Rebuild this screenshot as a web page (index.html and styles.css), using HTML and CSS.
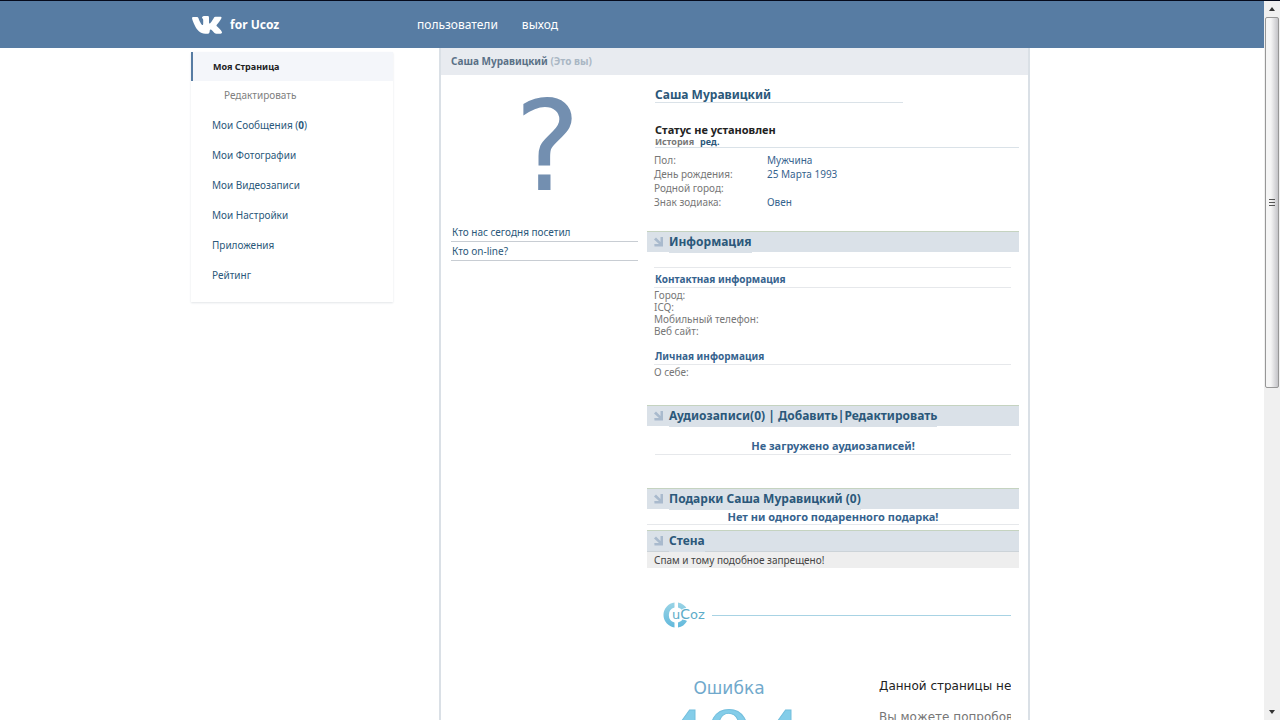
FILE: index.html
```html
<!DOCTYPE html>
<html lang="ru">
<head>
<meta charset="utf-8">
<title>Саша Муравицкий</title>
<link rel="stylesheet" href="styles.css">
</head>
<body>
<svg class="defs" aria-hidden="true">
  <symbol id="arrow" viewBox="0 0 10 10"><path d="M0 2.500L2 .5l4.500 4.500V0H9v9.500H.5L.3 7H5z" fill="#a9bacd"/></symbol>
</svg>
<div class="window">
  <div class="view">
    <header class="top">
      <div class="wrap top-row">
        <a class="brand" href="#">
          <svg class="vk" viewBox="0 0 30 18" aria-hidden="true"><path fill="#fff" d="M0 2Q0 1 1.200 1H5q1 0 1.500 1.200C7.800 6 9.600 9 10.500 9c.6 0 .7-.6.700-2V4c0-1.600-1.200-1.500-1.200-2.200C10 .6 11 0 13 0h2.500c1.200 0 1.500.6 1.500 2v4.500c0 1 .6 1.300 1.200.7C20 5.500 21.400 2.800 22 1.600 22.300 1 22.700.800 23.500.800h4.700c1.400 0 1.500.7 1.200 1.500-.8 2-3 4.600-4.600 6.500-.5.600-.4 1 .1 1.500 1.500 1.400 4.400 4.100 5 5.700.3 1-.2 1.700-1.500 1.700h-4c-1.500 0-2.300-1.200-4-3-1.400-1.500-2.400-1.800-2.600-.4-.2 2.200-.4 3.400-2 3.400h-2.500C8 17.700 5 14 2.800 9.500 1.500 7 .3 4 0 2z"/></svg>
          <span>for Ucoz</span>
        </a>
        <nav class="top-nav"><a href="#">пользователи</a><a href="#">выход</a></nav>
      </div>
    </header>
    <div class="wrap columns">
      <nav class="menu">
        <a class="current" href="#">Моя Страница</a>
        <a class="sub" href="#">Редактировать</a>
        <a href="#">Мои Сообщения (<b>0</b>)</a>
        <a href="#">Мои Фотографии</a>
        <a href="#">Мои Видеозаписи</a>
        <a href="#">Мои Настройки</a>
        <a href="#">Приложения</a>
        <a href="#">Рейтинг</a>
      </nav>
      <main class="panel">
        <h1 class="panel-title">Саша Муравицкий <span>(Это вы)</span></h1>
        <div class="panel-body">
          <div class="side">
            <div class="avatar">?</div>
            <a href="#">Кто нас сегодня посетил</a>
            <a href="#">Кто on-line?</a>
          </div>
          <div class="profile">
            <h2 class="name">Саша Муравицкий</h2>
            <div class="status">
              <p class="status-text">Статус не установлен</p>
              <p class="status-links"><a class="history" href="#">История</a><a href="#">ред.</a></p>
            </div>
            <table class="facts">
              <tr><th>Пол:</th><td>Мужчина</td></tr>
              <tr><th>День рождения:</th><td>25 Марта 1993</td></tr>
              <tr><th>Родной город:</th><td></td></tr>
              <tr><th>Знак зодиака:</th><td>Овен</td></tr>
            </table>

            <h2 class="bar"><svg aria-hidden="true"><use href="#arrow"/></svg><span>Информация</span></h2>
            <section class="info">
              <h3 class="contact">Контактная информация</h3>
              <ul><li>Город:</li><li>ICQ:</li><li>Мобильный телефон:</li><li>Веб сайт:</li></ul>
              <h3>Личная информация</h3>
              <ul><li>О себе:</li></ul>
            </section>

            <h2 class="bar"><svg aria-hidden="true"><use href="#arrow"/></svg><span>Аудиозаписи(0) | <a href="#">Добавить</a>|<a href="#">Редактировать</a></span></h2>
            <p class="empty audio">Не загружено аудиозаписей!</p>

            <h2 class="bar"><svg aria-hidden="true"><use href="#arrow"/></svg><span>Подарки Саша Муравицкий (0)</span></h2>
            <p class="empty gifts">Нет ни одного подаренного подарка!</p>

            <h2 class="bar"><svg aria-hidden="true"><use href="#arrow"/></svg><span>Стена</span></h2>
            <p class="notice">Спам и тому подобное запрещено!</p>

            <section class="frame">
              <div class="frame-head">
                <svg class="ucoz" viewBox="0 0 42 26" role="img" aria-label="uCoz">
                  <defs><linearGradient id="ring" x2="0" y2="1"><stop offset="0" stop-color="#9ad4e6"/><stop offset="1" stop-color="#62b9dc"/></linearGradient></defs>
                  <path fill="url(#ring)" d="M11.500 .5A12.600 12.600 0 0 0 11.500 25.500V20.500A7.800 7.800 0 0 1 11.500 5.500ZM15 .5Q21 1.500 24 7L20 9Q18 6 15 5.500ZM15 25.500Q21 24.500 24 19L20 17Q18 20 15 20.500Z"/>
                  <text x="9" y="17" class="ucoz-text">u<tspan class="ucoz-big">C</tspan>oz</text>
                </svg>
                <hr>
              </div>
              <div class="frame-body">
                <div class="error"><p>Ошибка</p><strong>404</strong></div>
                <div class="message"><p>Данной страницы не</p><p class="hint">Вы можете попробовать</p></div>
              </div>
            </section>
          </div>
        </div>
      </main>
    </div>
  </div>
  <div class="scroll" aria-hidden="true">
    <svg class="scroll-arrow" viewBox="0 0 16 16"><path d="M5 10l3-4 3 4z" fill="#333"/></svg>
    <div class="track"><div class="thumb"><i></i><i></i><i></i></div></div>
    <svg class="scroll-arrow" viewBox="0 0 16 16"><path d="M5 6l3 4 3-4z" fill="#333"/></svg>
  </div>
</div>
</body>
</html>
```
FILE: styles.css
```css
* { box-sizing: border-box; }
body {
  margin: 0;
  font: 10px/14px "Noto Sans", Tahoma, sans-serif;
  color: #777;
  background: #fff;
}
h1, h2, h3, p, ul { margin: 0; padding: 0; list-style: none; }
a { color: #2b587a; text-decoration: none; }
.defs { display: none; }
.window { display: flex; height: 100vh; border-top: 1px solid #050a1c; overflow: hidden; }
.view { flex: 1; min-width: 0; overflow: hidden; }
.wrap { max-width: 882px; margin: 0 auto; }

.top { background: #577ca3; }
.top-row { display: flex; align-items: center; height: 47px; }
.brand {
  display: flex; align-items: center; gap: 8px; width: 226px; padding-left: 1px;
  color: #fff; font: bold 12px/16px "Noto Sans", sans-serif;
}
.vk { width: 30px; height: 18px; }
.top-nav { display: flex; gap: 24px; font-size: 12px; line-height: 16px; }
.top-nav a { color: #fff; }

.columns { display: flex; align-items: flex-start; gap: 46px; }
.menu {
  display: flex; flex-direction: column; width: 202px; margin-top: 4px; padding-bottom: 12px;
  box-shadow: 0 1px 2px #e2e5e8;
}
.menu a { padding: 0 21px; line-height: 30px; }
.menu .current {
  border-left: 2px solid #577ca3; padding-left: 20px; background: #f4f6fa;
  color: #222; font-weight: bold; font-size: 9px; line-height: 29px;
}
.menu .sub { padding-left: 33px; color: #808080; line-height: 29px; }

.panel { width: 591px; border: solid #dae0e6; border-width: 0 2px; }
.panel-title {
  padding: 0 10px; background: #e8ebf0; color: #5a7187;
  font: bold 10px/27px "Noto Sans", Verdana, sans-serif;
}
.panel-title span { color: #aab7c4; }
.panel-body { display: flex; gap: 9px; padding: 0 9px 0 10px; }

.side { width: 187px; padding-top: 13px; }
.side a { display: block; padding: 1px; border-bottom: 1px solid #c8cdd3; line-height: 16px; }
.avatar { height: 135px; padding-left: 6px; text-align: center; color: #738fb0; font: 124px/118px "DejaVu Sans", Verdana, sans-serif; }

.profile { flex: 1; min-width: 0; padding-top: 13px; }
.name, .status-text, .status-links, .bar, .info h3, .empty { font-family: "Noto Sans", Verdana, sans-serif; font-weight: bold; }
.name { width: 248px; margin-left: 8px; border-bottom: 1px solid #dae2e8; color: #2b587a; font-size: 12px; line-height: 14px; }
.status { margin: 20px 0 0 8px; border-bottom: 1px solid #dae2e8; }
.status-text { color: #222; font-size: 11px; line-height: 14px; }
.status-links { display: flex; gap: 6px; font-size: 9px; line-height: 10px; }
.history { color: #777; }
.facts { margin: 5px 0 22px 7px; border-spacing: 0; line-height: 14px; }
.facts th { width: 113px; padding: 0; text-align: left; font-weight: normal; }
.facts td { padding: 0; color: #36638e; }

.bar {
  display: flex; align-items: center; gap: 5px; height: 21px; padding-left: 7px;
  border-top: 1px solid #c5d3c0; background: #dae1e8; color: #2b587a; font-size: 12px; line-height: 20px;
}
.bar svg { width: 10px; height: 10px; }
.bar a { color: inherit; }
.bar span { height: 21px; border-bottom: 1px solid #dae1e8; }
.info { margin: 15px 8px 16px 7px; border-top: 1px solid #e6e8eb; }
.info h3 { padding-left: 1px; border-bottom: 1px solid #e6e8eb; color: #36638e; font-size: 10px; line-height: 16px; }
.info .contact { margin-top: 3px; }
.info li { line-height: 12px; }
.info ul { padding: 1px 0 11px; }
.empty { color: #36638e; font-size: 11px; text-align: center; border-bottom: 1px solid #e6e8eb; }
.audio { margin: 12px 8px 33px; line-height: 16px; }
.gifts { margin-bottom: 5px; line-height: 15px; }
.notice { padding: 0 7px; border-top: 1px solid #ccd3d8; background: #eee; color: #444; line-height: 16px; }

.frame { margin: 34px 8px 0 16px; font-family: "DejaVu Sans", Verdana, sans-serif; }
.frame-head { display: flex; align-items: center; gap: 7px; }
.frame-head hr { flex: 1; margin: 0; border: 0; border-top: 1px solid #a8d3e4; }
.ucoz { width: 42px; height: 26px; }
.ucoz-text { font: 13px "DejaVu Sans", sans-serif; fill: #5dacc9; stroke: #fff; stroke-width: 2px; paint-order: stroke; }
.ucoz-big { font-size: 14px; }
.frame-body { display: flex; gap: 78px; margin-left: -6px; padding-top: 50px; white-space: nowrap; }
.error { width: 144px; text-align: center; font-size: 17px; line-height: 20px; color: #71a9cc; }
.error strong {
  display: block; font: 96px/86px "Liberation Serif", serif;
  color: #84cde9; -webkit-text-stroke: 1px #74bfdd;
}
.message { flex: 1; min-width: 0; overflow: hidden; color: #222; font-size: 12px; line-height: 16px; }
.hint { margin-top: 15px; color: #777; }

.scroll { display: flex; flex-direction: column; width: 16px; background: #f0f0f0; }
.scroll-arrow { display: block; width: 16px; height: 16px; }
.track { flex: 1; }
.thumb {
  display: flex; flex-direction: column; justify-content: center; align-items: center; gap: 1px;
  height: 54%; margin: 0 1px; border: 1px solid #979797; border-radius: 2px;
  background: linear-gradient(90deg, #f5f5f5 40%, #c4c4c8);
}
.thumb i { width: 6px; height: 2px; border-bottom: 1px solid #555; }
```
